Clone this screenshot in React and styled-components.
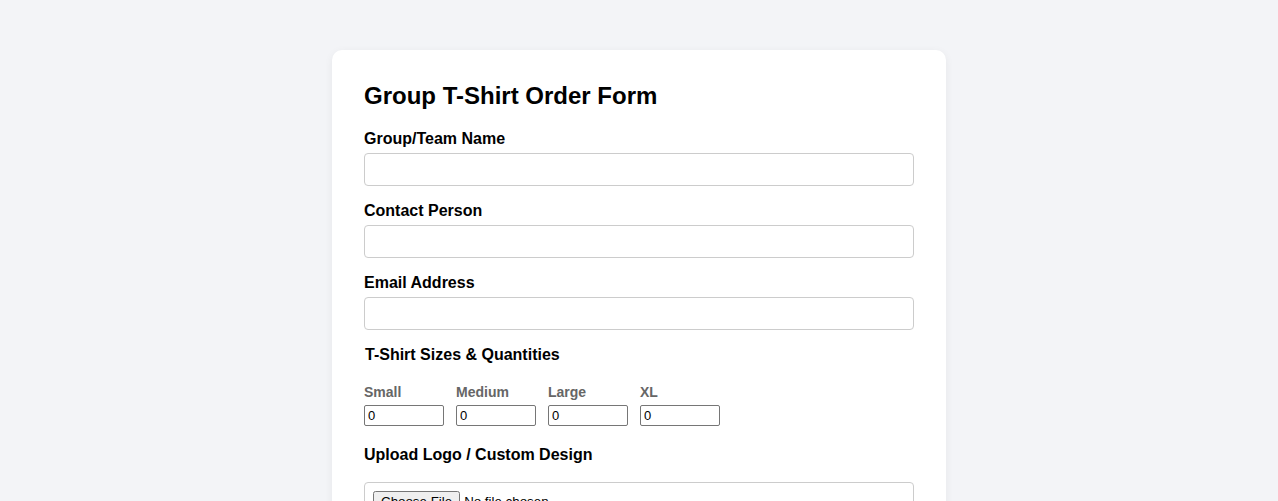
import React, { useState } from 'react';
import styled, { createGlobalStyle } from 'styled-components';

const Global = createGlobalStyle`
  body {
    margin: 0;
    background: #f3f4f7;
    font-family: "Liberation Sans", Arial, sans-serif;
    color: #000;
  }
`;

const Page = styled.div`
  display: flex;
  justify-content: center;
  padding-top: 50px;
`;

const Card = styled.form`
  width: 550px;
  padding: 32px;
  background: #fff;
  border-radius: 10px;
  box-shadow: 0 2px 8px rgba(0, 0, 0, 0.06);
`;

const Title = styled.h2`
  margin: 0 0 20px;
  font-size: 24px;
  line-height: 27px;
  font-weight: bold;
`;

const Field = styled.div`
  margin-bottom: 15px;
`;

const Label = styled.label`
  display: block;
  padding-top: 1px;
  font-size: 16px;
  line-height: 18px;
  font-weight: bold;
  margin-bottom: ${p => p.gap || 5}px;
`;

const TextInput = styled.input`
  display: block;
  box-sizing: border-box;
  width: 100%;
  height: 33px;
  padding: 8px;
  border: 1px solid #ccc;
  border-radius: 4px;
  font-family: inherit;
  font-size: 13px;
`;

const Sizes = styled.fieldset`
  border: none;
  margin: 0 0 19px;
  padding: 0;
`;

const Legend = styled.legend`
  padding: 1px 0 0 1px;
  font-size: 16px;
  line-height: 18px;
  font-weight: bold;
  margin-bottom: 20px;
`;

const SizeRow = styled.div`
  display: flex;
  gap: 12px;
`;

const SizeCol = styled.div`
  width: 80px;
`;

const SizeLabel = styled.label`
  display: block;
  font-size: 14px;
  line-height: 16px;
  font-weight: bold;
  color: #666;
  margin-bottom: 5px;
`;

const Qty = styled.input`
  display: block;
  box-sizing: border-box;
  width: 80px;
  height: 21px;
  padding: 1px 3px;
  border: 1px solid #767676;
  border-radius: 2px;
  font-family: inherit;
  font-size: 13px;
`;

const FileBox = styled.div`
  border: 1px solid #ccc;
  border-radius: 4px;
  padding: 8px;
  font-size: 13px;
`;

const sizes = ['Small', 'Medium', 'Large', 'XL'];

const App = () => {
  const [qty, setQty] = useState({ Small: 0, Medium: 0, Large: 0, XL: 0 });

  return (
    <Page>
      <Global />
      <Card onSubmit={(e) => e.preventDefault()}>
        <Title>Group T-Shirt Order Form</Title>
        <Field>
          <Label>Group/Team Name</Label>
          <TextInput type="text" />
        </Field>
        <Field>
          <Label>Contact Person</Label>
          <TextInput type="text" />
        </Field>
        <Field>
          <Label>Email Address</Label>
          <TextInput type="email" />
        </Field>
        <Sizes>
          <Legend>T-Shirt Sizes &amp; Quantities</Legend>
          <SizeRow>
            {sizes.map((s) => (
              <SizeCol key={s}>
                <SizeLabel>{s}</SizeLabel>
                <Qty
                  type="text"
                  value={qty[s]}
                  onChange={(e) => setQty({ ...qty, [s]: e.target.value })}
                />
              </SizeCol>
            ))}
          </SizeRow>
        </Sizes>
        <Field>
          <Label gap={18}>Upload Logo / Custom Design</Label>
          <FileBox>
            <input type="file" />
          </FileBox>
        </Field>
      </Card>
    </Page>
  );
};

export default App;
